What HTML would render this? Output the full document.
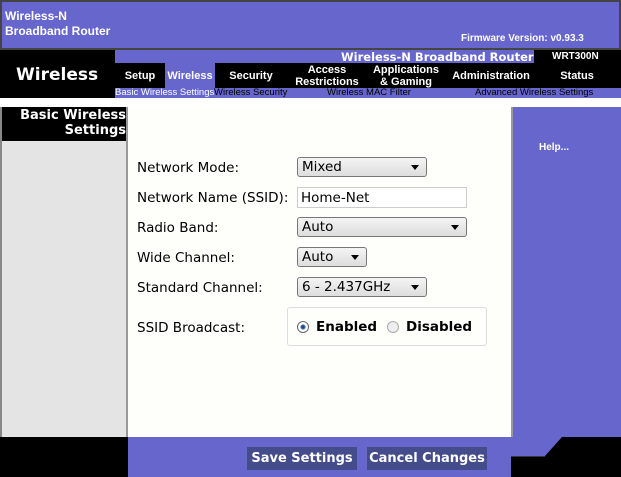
<!DOCTYPE html><html><head><style>
body{margin:0;width:621px;height:477px;overflow:hidden;background:#fff;font-family:"Liberation Sans",sans-serif;position:relative}
div{position:absolute;box-sizing:border-box}
.b{font-weight:bold}
.sel{height:20px;border:1px solid #777;border-radius:3px;background:linear-gradient(#f4f4f4,#ddd);font-family:"DejaVu Sans",sans-serif;font-size:13.5px;padding:1px 4px;line-height:17px}
.sel:after{content:"";position:absolute;right:7px;top:7px;border:4px solid transparent;border-top:5px solid #000;border-bottom:0}
.lbl{font-family:"DejaVu Sans",sans-serif;font-size:13.5px;left:137px}
.tab{color:#fff;font-weight:bold;font-size:11px;text-align:center;line-height:12px;display:flex;align-items:center;justify-content:center;top:63px;height:25px}
.sub{font-size:9.5px;color:#000;top:88px;height:10px;line-height:10px}
</style></head><body>
<div style="left:0;top:0;width:621px;height:50px;background:#6666cc;border:2px solid #444"></div>
<div class="b" style="left:5px;top:9px;color:#fff;font-size:12px;line-height:15px">Wireless-N<br>Broadband Router</div>
<div class="b" style="left:461px;top:33px;color:#fff;font-size:10px">Firmware Version: v0.93.3</div>
<div style="left:0;top:50px;width:621px;height:48px;background:#000"></div>
<div style="left:115px;top:50px;width:419px;height:13px;background:#6666cc"></div>
<div class="b" style="left:341px;top:50px;color:#fff;font-size:11.5px;font-family:'DejaVu Sans',sans-serif">Wireless-N Broadband Router</div>
<div class="b" style="left:552px;top:51px;color:#fff;font-size:10px">WRT300N</div>
<div class="b" style="left:16px;top:65px;color:#fff;font-size:17px;font-family:'DejaVu Sans',sans-serif">Wireless</div>
<div class="tab" style="left:115px;width:50px">Setup</div>
<div class="tab" style="left:165px;width:50px;background:#6666cc">Wireless</div>
<div class="tab" style="left:215px;width:72px">Security</div>
<div class="tab" style="left:287px;width:80px">Access<br>Restrictions</div>
<div class="tab" style="left:367px;width:78px">Applications<br>&amp; Gaming</div>
<div class="tab" style="left:445px;width:92px">Administration</div>
<div class="tab" style="left:537px;width:80px">Status</div>
<div style="left:115px;top:88px;width:506px;height:10px;background:#6666cc"></div>
<div class="sub" style="left:115px;color:#fff">Basic Wireless Settings</div>
<div class="sub" style="left:214px">Wireless Security</div>
<div class="sub" style="left:327px">Wireless MAC Filter</div>
<div class="sub" style="left:475px">Advanced Wireless Settings</div>
<div style="left:0;top:107px;width:2px;height:330px;background:#888"></div>
<div style="left:2px;top:107px;width:124px;height:330px;background:#e4e4e4"></div>
<div style="left:2px;top:107px;width:124px;height:34px;background:#000"></div>
<div class="b" style="left:2px;top:108px;width:124px;text-align:right;color:#fff;font-size:13px;line-height:15px;font-family:'DejaVu Sans',sans-serif">Basic Wireless<br>Settings</div>
<div style="left:126px;top:107px;width:2px;height:330px;background:#999"></div>
<div style="left:128px;top:107px;width:383px;height:330px;background:#fefefa"></div>
<div style="left:511px;top:107px;width:2px;height:330px;background:#999"></div>
<div style="left:513px;top:107px;width:108px;height:330px;background:#6666cc"></div>
<div class="b" style="left:539px;top:142px;color:#fff;font-size:10px">Help...</div>
<div class="lbl" style="top:160px">Network Mode:</div>
<div class="sel" style="left:297px;top:157px;width:130px">Mixed</div>
<div class="lbl" style="top:190px">Network Name (SSID):</div>
<div style="left:297px;top:187px;width:170px;height:21px;border:1px solid #ccc;font-family:'DejaVu Sans',sans-serif;font-size:13.5px;padding:2px 3px;background:#fff">Home-Net</div>
<div class="lbl" style="top:220px">Radio Band:</div>
<div class="sel" style="left:297px;top:217px;width:170px">Auto</div>
<div class="lbl" style="top:250px">Wide Channel:</div>
<div class="sel" style="left:297px;top:247px;width:70px">Auto</div>
<div class="lbl" style="top:280px">Standard Channel:</div>
<div class="sel" style="left:297px;top:277px;width:130px">6 - 2.437GHz</div>
<div class="lbl" style="top:320px">SSID Broadcast:</div>
<div style="left:287px;top:307px;width:200px;height:39px;border:1px solid #ddd;border-radius:3px"></div>
<div style="left:297px;top:321px;width:12px;height:12px;border-radius:50%;border:1px solid #667;background:radial-gradient(#236 0,#36a 2px,#fff 3px)"></div>
<div class="b" style="left:316px;top:319px;font-family:'DejaVu Sans',sans-serif;font-size:13.5px">Enabled</div>
<div style="left:387px;top:321px;width:12px;height:12px;border-radius:50%;border:1px solid #aaa;background:#eee"></div>
<div class="b" style="left:406px;top:319px;font-family:'DejaVu Sans',sans-serif;font-size:13.5px">Disabled</div>
<div style="left:0;top:437px;width:128px;height:40px;background:#000"></div>
<div style="left:128px;top:437px;width:383px;height:40px;background:#6666cc"></div>
<div style="left:511px;top:437px;width:110px;height:40px;background:#000"></div>
<svg style="position:absolute;left:511px;top:437px" width="110" height="40"><path d="M0 0H51L34 19H0Z" fill="#6666cc"/><path d="M0 19.5H34" stroke="#334" stroke-width="1"/></svg>
<div class="b" style="left:247px;top:447px;width:110px;height:23px;background:#444c8c;color:#fff;font-size:13px;font-family:'DejaVu Sans',sans-serif;text-align:center;line-height:23px">Save Settings</div>
<div class="b" style="left:367px;top:447px;width:120px;height:23px;background:#444c8c;color:#fff;font-size:13px;font-family:'DejaVu Sans',sans-serif;text-align:center;line-height:23px">Cancel Changes</div>
</body></html>
